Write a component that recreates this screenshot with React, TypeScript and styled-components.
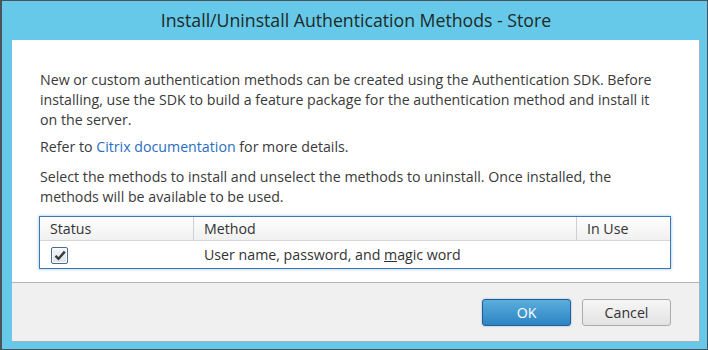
import styled, { createGlobalStyle } from 'styled-components'

const GlobalStyle = createGlobalStyle`
  * { box-sizing: border-box; }
  body {
    margin: 0;
    background: #ffffff;
    font-family: "Open Sans", "Noto Sans", sans-serif;
  }
`

const Window = styled.div`
  width: 708px;
  height: 350px;
  background: #66c9e9;
  border: 1px solid #4b5358;
  border-left-width: 2px;
  padding: 0 7px 7px 10px;
  display: flex;
  flex-direction: column;
`

const TitleBar = styled.div`
  height: 39px;
  display: flex;
  align-items: center;
  justify-content: center;
  font-size: 17.7px;
  color: #1e2a26;
  padding-bottom: 2px;
`

const Panel = styled.div`
  flex: 1;
  display: flex;
  flex-direction: column;
  border-right: 1px solid #9fb4bd;
  border-bottom: 1px solid #9fb4bd;
`

const Body = styled.div`
  background: #ffffff;
  padding: 30px 28px 13px 27px;
  border-bottom: 1px solid #b5b5b5;
`

const Para = styled.p<{ $gap?: number }>`
  margin: 0 0 ${p => p.$gap ?? 0}px 1px;
  font-size: 14.2px;
  line-height: 20px;
  color: #3a3a3a;
  white-space: nowrap;
`

const Link = styled.a`
  color: #2a6ebf;
  text-decoration: none;
`

const Grid = styled.div`
  display: grid;
  grid-template-columns: 154px 383px 1fr;
  border: 1px solid #3b79b3;
  box-shadow: 0 0 3px rgba(70, 140, 205, 0.55);
  font-size: 14.2px;
  color: #333333;
`

const HeadCell = styled.div<{ $last?: boolean }>`
  height: 24px;
  display: flex;
  align-items: center;
  padding-left: 10px;
  background: linear-gradient(#ffffff, #f0f0f0);
  border-bottom: 1px solid #d6d6d6;
  border-right: ${p => (p.$last ? 'none' : '1px solid #d0d0d0')};
`

const Cell = styled.div`
  height: 27px;
  display: flex;
  align-items: center;
  padding-left: 10px;
`

const CheckBox = styled.span`
  width: 17px;
  height: 17px;
  margin-left: 1px;
  margin-top: 2px;
  border: 1px solid #4a6c8c;
  border-radius: 2px;
  background: linear-gradient(#f4f6f8, #dde3e9);
  box-shadow: inset 0 0 0 1px #ffffff;
  display: flex;
  align-items: center;
  justify-content: center;
`

const Footer = styled.div`
  flex: 1;
  background: #f0f0f0;
  display: flex;
  align-items: center;
  justify-content: flex-end;
  gap: 11px;
  padding: 1px 28px 0 0;
`

const Button = styled.button<{ $primary?: boolean }>`
  width: 89px;
  height: 27px;
  border-radius: 3px;
  font-family: inherit;
  font-size: 14.2px;
  padding: 0;
  border: 1px solid ${p => (p.$primary ? '#1f5f93' : '#acacac')};
  color: ${p => (p.$primary ? '#ffffff' : '#333333')};
  background: ${p =>
    p.$primary
      ? 'linear-gradient(#5aaedc, #2d84c3)'
      : 'linear-gradient(#f6f6f6, #e3e3e3)'};
  box-shadow: ${p => (p.$primary ? '0 0 2px rgba(40, 110, 170, 0.5)' : 'none')};
`

const AccessKey = styled.span`
  text-decoration: underline;
`

const App = () => {
  return (
    <>
      <GlobalStyle />
      <Window>
        <TitleBar>Install/Uninstall Authentication Methods - Store</TitleBar>
        <Panel>
          <Body>
            <Para $gap={7}>
              New or custom authentication methods can be created using the Authentication SDK. Before
              <br />
              installing, use the SDK to build a feature package for the authentication method and install it
              <br />
              on the server.
            </Para>
            <Para $gap={10}>
              Refer to <Link href="#">Citrix documentation</Link> for more details.
            </Para>
            <Para $gap={9}>
              Select the methods to install and unselect the methods to uninstall. Once installed, the
              <br />
              methods will be available to be used.
            </Para>
            <Grid>
              <HeadCell>Status</HeadCell>
              <HeadCell>Method</HeadCell>
              <HeadCell $last>In Use</HeadCell>
              <Cell>
                <CheckBox>
                  <svg width="12" height="11" viewBox="0 0 12 11">
                    <path d="M1.5 5.8 L4.5 8.8 L10.8 1.6" fill="none" stroke="#3a3a3a" strokeWidth="2.4" />
                  </svg>
                </CheckBox>
              </Cell>
              <Cell>
                User name, password, and&nbsp;<AccessKey>m</AccessKey>agic word
              </Cell>
              <Cell />
            </Grid>
          </Body>
          <Footer>
            <Button $primary>OK</Button>
            <Button>Cancel</Button>
          </Footer>
        </Panel>
      </Window>
    </>
  )
}

export default App
